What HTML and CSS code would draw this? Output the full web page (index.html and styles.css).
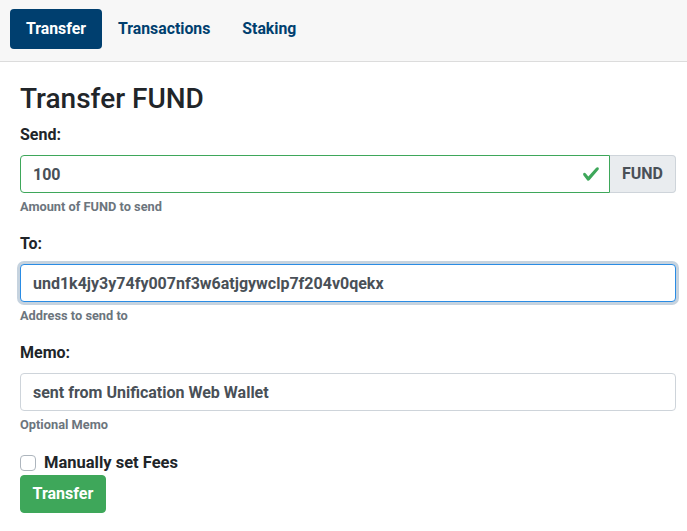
FILE: index.html
```html
<!DOCTYPE html>
<html>
<head>
<meta charset="utf-8">
<link rel="stylesheet" href="styles.css">
</head>
<body>
<nav class="topnav">
  <a class="nav-link active">Transfer</a>
  <a class="nav-link">Transactions</a>
  <a class="nav-link">Staking</a>
</nav>
<main class="content">
  <h2 class="title">Transfer FUND</h2>
  <div class="form-group">
    <label class="label">Send:</label>
    <div class="input-group">
      <div class="valid-wrap">
        <input class="form-control is-valid" value="100">
        <svg class="valid-icon" viewBox="0 0 8 8" width="18" height="18"><path fill="#3ea75a" d="M2.3 6.73L.6 4.53c-.4-1.04.46-1.4 1.1-.8l1.1 1.4 3.4-3.8c.6-.63 1.6-.27 1.2.7l-4 4.6c-.43.5-.8.4-1.1.1z"/></svg>
      </div>
      <span class="append">FUND</span>
    </div>
    <small class="help">Amount of FUND to send</small>
  </div>
  <div class="form-group">
    <label class="label">To:</label>
    <input class="form-control focus" value="und1k4jy3y74fy007nf3w6atjgywclp7f204v0qekx">
    <small class="help">Address to send to</small>
  </div>
  <div class="form-group">
    <label class="label">Memo:</label>
    <input class="form-control" value="sent from Unification Web Wallet">
    <small class="help">Optional Memo</small>
  </div>
  <div class="check-row">
    <span class="checkbox"></span>
    <span class="check-label">Manually set Fees</span>
  </div>
  <button class="btn-success">Transfer</button>
</main>
</body>
</html>
```
FILE: styles.css
```css
* { box-sizing: border-box; }
html, body { margin: 0; }
body {
  font-family: Roboto, "Liberation Sans", sans-serif;
  font-weight: 700;
  font-size: 16px;
  line-height: 1.5;
  color: #212529;
  background: #fff;
}
.topnav {
  display: flex;
  align-items: center;
  height: 62px;
  padding: 9px 10px 13px;
  background: #f7f7f7;
  border-bottom: 1px solid #dcdcdc;
}
.nav-link {
  display: block;
  padding: 8px 16px;
  font-size: 15.8px;
  line-height: 24px;
  color: #003f6f;
  border-radius: 4px;
}
.nav-link.active {
  background: #003f6f;
  color: #fff;
}
.content {
  padding: 0 11px 0 20px;
}
.title {
  margin: 19.5px 0 8px;
  font-size: 28px;
  font-weight: 500;
  line-height: 1.2;
}
.form-group {
  margin-bottom: 16px;
}
.label {
  display: block;
  margin-bottom: 8px;
}
.form-control {
  display: block;
  width: 100%;
  height: 38px;
  padding: 6px 12px;
  font: inherit;
  color: #495057;
  background: #fff;
  border: 1px solid #ced4da;
  border-radius: 4px;
  outline: none;
}
.form-control.focus {
  border-color: #2a8ce4;
  box-shadow: 0 0 0 3px #c6d3df;
}
.input-group {
  display: flex;
}
.valid-wrap {
  position: relative;
  flex: 1;
}
.form-control.is-valid {
  border-color: #3ea75a;
  border-radius: 4px 0 0 4px;
  padding-right: 40px;
}
.valid-icon {
  position: absolute;
  right: 10px;
  top: 10px;
}
.append {
  display: flex;
  align-items: center;
  height: 38px;
  padding: 0 12px;
  color: #495057;
  background: #e9ecef;
  border: 1px solid #ced4da;
  border-left: 0;
  border-radius: 0 4px 4px 0;
}
.help {
  display: block;
  margin-top: 4px;
  font-size: 12.8px;
  line-height: 1.5;
  color: #6c757d;
}
.check-row {
  display: flex;
  align-items: center;
  height: 24px;
}
.checkbox {
  width: 16px;
  height: 16px;
  border: 1px solid #adb5bd;
  border-radius: 4px;
  background: #fff;
  margin-right: 8px;
}
.check-label {
  font-size: 16.5px;
  line-height: 24px;
}
.btn-success {
  display: block;
  height: 38px;
  padding: 6px 11.5px;
  font: inherit;
  color: #fff;
  background: #3ea75a;
  border: 1px solid #3ea75a;
  border-radius: 4px;
}
```
